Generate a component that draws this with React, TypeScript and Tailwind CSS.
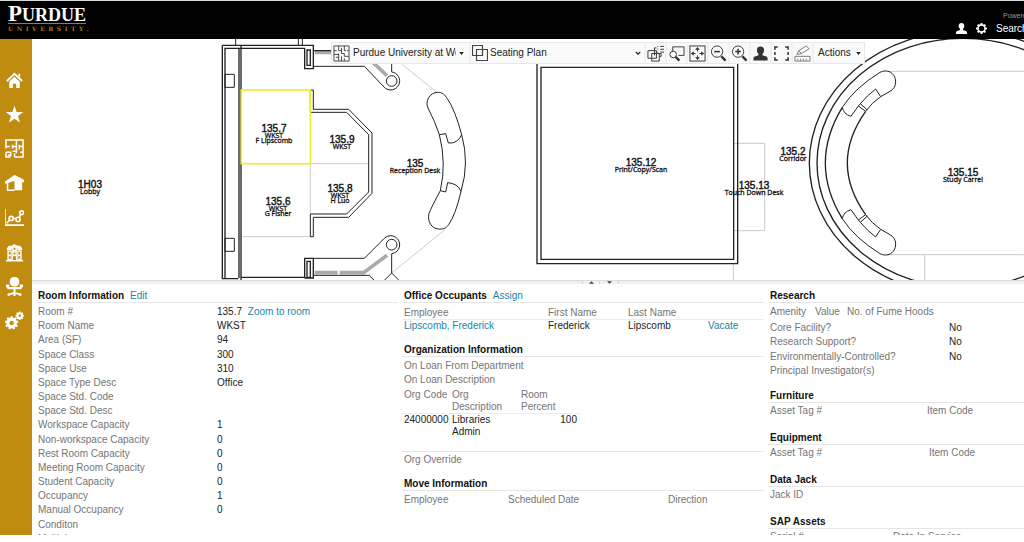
import type { ReactNode } from "react";

// ── Small building blocks ───────────────────────────────────────────────────

function Heading({ title, action }: { title: string; action?: string }) {
  return (
    <div className="flex gap-1.5 border-b border-[#e6e6e6] pl-[2px] leading-3">
      <h2 className="font-bold text-[#111]">{title}</h2>
      {action && (
        <a href="#" className="text-[#1c84a8]">
          {action}
        </a>
      )}
    </div>
  );
}

function Fields({ rows, className, valueAt }: { rows: [string, ReactNode?][]; className: string; valueAt: string }) {
  return (
    <table className={`w-full table-fixed ${className}`}>
      <tbody>
        {rows.map(([label, value]) => (
          <tr key={label}>
            <th scope="row" className={`${valueAt} py-0 pl-[2px] text-left font-normal text-[#757575]`}>
              {label}
            </th>
            <td className="p-0">{value}</td>
          </tr>
        ))}
      </tbody>
    </table>
  );
}

// Header-only tables: [label, width class]
function Columns({ cols }: { cols: [string, string][] }) {
  return (
    <table className="w-full table-fixed">
      <thead>
        <tr>
          {cols.map(([label, width]) => (
            <th key={label} scope="col" className={`${width} py-0 pl-[2px] text-left font-normal whitespace-nowrap text-[#757575]`}>
              {label}
            </th>
          ))}
        </tr>
      </thead>
    </table>
  );
}

// ── Header ──────────────────────────────────────────────────────────────────

function Logo() {
  return (
    <a href="#" aria-label="Purdue University" className="ml-2 w-[81px] font-['Liberation_Serif',serif] font-bold">
      <span className="block h-[19px] w-[78px] border-b border-[#a37c1c] text-[18px] leading-[18px] text-white">
        <span className="text-[23px]">P</span>URDUE
      </span>
      <span className="mt-[2px] flex justify-between font-['DejaVu_Serif',serif] text-[6px] leading-[6px] text-[#a37c1c]">
        {"UNIVERSITY.".split("").map((c, i) => (
          <span key={i}>{c}</span>
        ))}
      </span>
    </a>
  );
}

function PersonIcon({ className }: { className: string }) {
  return (
    <svg viewBox="0 0 16 16" className={className} fill="currentColor">
      <path d="M8 0c2.700 0 4.100 1.900 4.100 4.300 0 1.900-.9 3.300-1.900 4.200v1.700l4.300 1.400c1 .4 1.500 1.300 1.500 2.400v2H0v-2c0-1.100.5-2 1.500-2.400l4.300-1.400V8.500C4.800 7.600 3.900 6.200 3.900 4.300 3.900 1.900 5.300 0 8 0Z" />
    </svg>
  );
}

function Gear({ cx, cy, r, hole, teeth = 8 }: { cx: number; cy: number; r: number; hole: number; teeth?: number }) {
  return (
    <g>
      <circle cx={cx} cy={cy} r={(r + hole) / 2 - r * 0.1} fill="none" stroke="currentColor" strokeWidth={r * 0.8 - hole} />
      {Array.from({ length: teeth }, (_, i) => (
        <rect
          key={i}
          x={cx - r * 0.17}
          y={cy - r}
          width={r * 0.34}
          height={r * 0.4}
          fill="currentColor"
          transform={`rotate(${(i * 360) / teeth} ${cx} ${cy})`}
        />
      ))}
    </g>
  );
}

function Header() {
  return (
    <header className="flex h-[39px] shrink-0 overflow-hidden border-t border-[#d5dcda] bg-black pt-[4px]">
      <Logo />
      <div className="ml-auto flex items-end gap-[9px] pb-[5px]">
        <button type="button" aria-label="Account" className="text-white">
          <PersonIcon className="block h-[11px] w-[11px]" />
        </button>
        <button type="button" aria-label="Settings" className="text-white">
          <svg viewBox="0 0 12 12" className="block h-[11px] w-[11px]">
            <Gear cx={6} cy={6} r={6} hole={3} />
          </svg>
        </button>
        <div className="flex w-7 flex-col gap-1 whitespace-nowrap">
          <span className="pl-[7px] text-[7px] leading-[8px] text-[#9a9a9a]">Powered by</span>
          <a href="#" className="text-[10px] leading-[10px] text-white">
            Search
          </a>
        </div>
      </div>
    </header>
  );
}

// ── Sidebar ─────────────────────────────────────────────────────────────────

const NAV: { label: string; icon: ReactNode }[] = [
  {
    label: "Home",
    icon: (
      <>
        <path d="M2 10.500 10 3l8 7.500" fill="none" stroke="currentColor" strokeWidth="2" />
        <path d="M14 3h2v4l-2-2zM4.500 11 10 6l5.500 5v7h-3.700v-4.500H8.300V18H4.500z" fill="currentColor" />
      </>
    ),
  },
  { label: "Favorites", icon: <path d="m10 .8 2.300 6.600h7l-5.600 4.200 2.100 6.900L10 14.400l-5.800 4.100 2.100-6.900L.7 7.400h7z" fill="currentColor" /> },
  {
    label: "Floor plans",
    icon: (
      <path
        d="M6 19H1v-5M1 10V1h18v18H10M1 8h4M12 1v7H8M12 8v5H8M15 8h4M8 6v4M15 6v5M1 14h5v3H3M12 13v2M16 14h3M10 19v-4"
        fill="none"
        stroke="currentColor"
        strokeWidth="1.600"
      />
    ),
  },
  {
    label: "Space",
    icon: (
      <>
        <path d="M0 8 10 1l10 5v3l-2-.5V17H10V7L2 10H0z" fill="currentColor" />
        <path d="M2.700 9.500V17H10" fill="none" stroke="currentColor" strokeWidth="1.600" />
      </>
    ),
  },
  {
    label: "Reports",
    icon: (
      <g fill="none" stroke="currentColor" strokeWidth="1.700">
        <path d="M0 1v17h20M2 16l2.700-3.500M8.500 11h3.500M15 10l1.500-3.500" />
        <circle cx="6.500" cy="11" r="2.200" />
        <circle cx="13.700" cy="12" r="2.200" />
        <circle cx="17.500" cy="5" r="2" />
      </g>
    ),
  },
  {
    label: "Buildings",
    icon: (
      <>
        <path d="M2 8V5.500L4 3h3l3-2 3 2h3l2 2.500V8zM2.500 8h15v10H19v1.500H1V18h1.500z" fill="currentColor" />
        <path d="M4 9.500h2V12H4zM4 14h2v2.500H4zM14 9.500h2V12h-2zM14 14h2v2.500h-2zM9 5h2v2H9zM9 10h2v2H9zM8.500 14h3v4h-3z" fill="#c08c10" />
        <path d="M7.200 5.500v12.500M12.800 5.500v12.500M2 8h5M13 8h5" stroke="#c08c10" strokeWidth=".5" />
      </>
    ),
  },
  {
    label: "Workstations",
    icon: (
      <>
        <rect x="5" y="0" width="10" height="10" rx="4.500" fill="currentColor" />
        <path d="M1 8h3.500v2.500h11V8H19v2l-2 3H3l-2-3z" fill="currentColor" />
        <path d="M10 12v6M4 18.500l6-2 6 2" fill="none" stroke="currentColor" strokeWidth="2" />
        <circle cx="4" cy="18.500" r="1.400" fill="currentColor" />
        <circle cx="10" cy="18.600" r="1.400" fill="currentColor" />
        <circle cx="16" cy="18.500" r="1.400" fill="currentColor" />
      </>
    ),
  },
  {
    label: "Administration",
    icon: (
      <>
        <Gear cx={7} cy={12.500} r={7} hole={2.300} teeth={9} />
        <Gear cx={15.500} cy={5} r={4.500} hole={1.300} />
      </>
    ),
  },
];

function Sidebar() {
  return (
    <nav className="w-8 shrink-0 bg-[#c08c10] pt-6">
      <ul className="grid h-[275px] grid-rows-8 text-white">
        {NAV.map(({ label, icon }) => (
          <li key={label} className="flex items-center pl-[5px]">
            <a href="#" aria-label={label}>
              <svg viewBox="0 0 20 20" className="block h-[19px] w-[19px]">
                {icon}
              </svg>
            </a>
          </li>
        ))}
      </ul>
    </nav>
  );
}

// ── Floor plan ──────────────────────────────────────────────────────────────

// [center x, baseline of the number, number, lines below it]
const ROOMS: [number, number, string, string[]][] = [
  [90, 188, "1H03", ["Lobby"]],
  [274, 132, "135.7", ["WKST", "F Lipscomb"]],
  [342, 143, "135.9", ["WKST"]],
  [340, 192, "135.8", ["WKST", "H Luo"]],
  [278, 205, "135.6", ["WKST", "G Fisher"]],
  [415, 167, "135", ["Reception Desk"]],
  [641, 166, "135.12", ["Print/Copy/Scan"]],
  [754, 189, "135.13", ["Touch Down Desk"]],
  [793, 155, "135.2", ["Corridor"]],
  [963, 176, "135.15", ["Study Carrel"]],
];

function CarrelEnd() {
  return (
    <path d="M187 208Q224 150 300 103C320 92 347 103 347 132Q347 150 330 160L302 176L287 153Q262 172 241 197L262 216M302 176Q275 194 257 220L235 204L213 235Q190 228 187 208M241 197L235 204" />
  );
}

function FloorPlan() {
  return (
    <svg viewBox="32 39 992 241" preserveAspectRatio="xMinYMin slice" className="h-full w-full bg-white">
      <g fill="none" stroke="#222" strokeWidth="3">
        {/* west wall, workstations and reception */}
        <g transform="translate(215 38) scale(.33333)">
          <g stroke="#ccc">
            <path d="M78 377H461M286 377V528M78 596H286M560 78L665 163M690 575L530 705" />
          </g>
          <g stroke="#aaa" strokeWidth="11">
            <path d="M299 43H350M466 66L516 113M299 704H368M374 704H446L516 652" />
          </g>
          <path d="M62 0V22M250 0V22M262 0V22" />
          <path d="M22 22H295V92H269V31H30V720M22 22V722H70M72 31V720M78 22V727M276 36H286V82H276ZM295 38H350" strokeWidth="4" />
          <path d="M30 109H58V148H30ZM30 601H58V640H30Z" />
          <path d="M295 85H448L508 148A27 27 0 1 0 530 102V78M295 661H448L508 601A27 27 0 1 1 530 647V705L508 727M530 705L552 727M295 712H462L478 727" />
          <circle cx="530" cy="129" r="16" />
          <circle cx="530" cy="620" r="16" />
          <path d="M269 718V661H295V720H269M276 670H286V718H276ZM78 718H269" strokeWidth="4" />
          <path d="M286 156H295V214H401L471 285V466L401 538H295V596H286V528H395L461 462V290L395 223H286Z" />
          <path d="M640 212C628 190 645 163 668 163C682 163 690 170 697 182Q720 215 740 290Q764 375 738 460Q722 530 701 560C692 573 682 574 670 573C650 572 636 550 642 526Q650 506 676 458Q695 375 673 290Q660 250 640 212Z" />
          <path d="M673 290L692 287L700 315Q728 318 740 290M676 458L692 462L698 434Q728 436 738 460" />
          <rect x="79" y="156" width="207" height="221" stroke="#f4ee2c" strokeWidth="5" />
        </g>
        {/* print room */}
        <g transform="translate(500 38) scale(.33333)">
          <path d="M701 316H794V578H701M700 677V727" stroke="#ccc" />
          <path d="M111 70V677H713V70" strokeWidth="4" />
          <path d="M123 88H701V664H123Z" strokeWidth="4" />
        </g>
        {/* study carrels */}
        <g transform="translate(780 38) scale(.33333)">
          <path d="M325 100H732M320 650H732M434 650V727" stroke="#ccc" />
          <ellipse cx="553" cy="375" rx="465" ry="396" strokeWidth="4" />
          <ellipse cx="549" cy="375" rx="438" ry="374" strokeWidth="4" />
          <path d="M187 208Q85 375 187 542M257 220Q147 375 257 530" strokeWidth="4" />
          <CarrelEnd />
          <g transform="translate(0 750) scale(1 -1)">
            <CarrelEnd />
          </g>
        </g>
      </g>
      <g textAnchor="middle" fill="#111" stroke="#111">
        {ROOMS.map(([x, y, room, lines]) => (
          <g key={room}>
            <text x={x} y={y} fontSize="10" strokeWidth=".4">
              {room}
            </text>
            {lines.map((line, i) => (
              <text key={line} x={x} y={y + 6 + i * 5} fontSize="7" strokeWidth=".3" className="font-['Open_Sans',sans-serif]">
                {line}
              </text>
            ))}
          </g>
        ))}
      </g>
    </svg>
  );
}

// ── Plan toolbar ────────────────────────────────────────────────────────────

const TOOLS: { label: string; icon: ReactNode }[] = [
  {
    label: "Layers",
    icon: <path d="M1 6h9v8H1zM5 9h8v8H5zM8 11V3h2M13 9h2v3h-2M11 1.500h1M14 1.500h4M11 4.500h1M14 4.500h4M11 7.500h1M14 7.500h4" />,
  },
  {
    label: "Zoom window",
    icon: (
      <>
        <path d="M5 7V2h12v9h-6" />
        <circle cx="5.500" cy="10" r="3.500" />
        <path d="m8 12.500 4 4" strokeWidth="2.500" />
      </>
    ),
  },
  {
    label: "Zoom extents",
    icon: (
      <>
        <rect x="1" y="1" width="16" height="16" />
        <path d="M9 3v4M9 11v4M3 9h4M11 9h4" />
        <path d="m9 2 2.500 3h-5zM9 16l2.500-3h-5zM2 9l3-2.500v5zM16 9l-3-2.500v5z" fill="currentColor" stroke="none" />
      </>
    ),
  },
  {
    label: "Zoom out",
    icon: (
      <>
        <circle cx="7.500" cy="7" r="6" />
        <path d="M4.500 7h6" strokeWidth="1.600" />
        <path d="m12 12 4.500 4.500" strokeWidth="2.500" />
      </>
    ),
  },
  {
    label: "Zoom in",
    icon: (
      <>
        <circle cx="7.500" cy="7" r="6" />
        <path d="M4.500 7h6M7.500 4v6" strokeWidth="1.600" />
        <path d="m12 12 4.500 4.500" strokeWidth="2.500" />
      </>
    ),
  },
  {
    label: "Find person",
    icon: (
      <path
        d="M9 1.500c2.600 0 3.800 1.700 3.800 4 0 1.800-.8 3-1.700 3.900v1.500l4 1.300c.9.300 1.400 1.200 1.400 2.200v2.100h-15v-2.100c0-1 .5-1.900 1.400-2.200l4-1.300V9.400C6 8.500 5.200 7.300 5.200 5.500c0-2.300 1.200-4 3.800-4Z"
        fill="currentColor"
        stroke="none"
      />
    ),
  },
  { label: "Full screen", icon: <path d="M2 5V2h3M13 2h3v3M16 13v3h-3M5 16H2v-3M2 7.500v3M16 7.500v3" strokeWidth="1.600" /> },
  {
    label: "Measure",
    icon: (
      <g stroke="#777">
        <path d="M3 10 5 6l8-5 3 3-8 5zM5 6l3 3M1 12h16v5H1zM4 14.500v2M7 14.500v2M10 14.500v2M13 14.500v2" />
      </g>
    ),
  },
];

function Toolbar() {
  return (
    <div role="toolbar" className="absolute top-[3px] left-[299px] flex h-[22px] items-stretch gap-[2px] border border-[#e8e8e8] bg-[#f1f1f1] text-[#222]">
      <button type="button" className="flex w-[137px] items-center gap-[3px] bg-[#fafafa] pl-[1px]">
        <svg viewBox="0 0 18 18" className="h-[17px] w-[17px] shrink-0" fill="none" stroke="#444">
          <path d="M1 1h16v16H1zM1 6h3M6 1v5M6 6h3M9 3v6M1 10h5M6 9v8M9 12v5M9 9h3M12 1v5M12 6h2M15 6h2M12 9v3M12 12h5M12 14v3M3 13h3" />
        </svg>
        <span className="w-[103px] overflow-hidden text-left whitespace-nowrap">Purdue University at West</span>
        <svg viewBox="0 0 6 4" className="h-[3px] w-[5px] shrink-0">
          <path d="M0 0h6L3 4z" fill="#222" />
        </svg>
      </button>
      <div className="flex w-[173px] items-center gap-[2px] bg-[#fafafa] pl-[1px]">
        <svg viewBox="0 0 16 16" className="h-[16px] w-[16px] shrink-0" fill="none" stroke="#444">
          <path d="M.5.5h10v10H.5zM4.500 4.500h11v11h-11z" strokeWidth="1.200" />
        </svg>
        <select aria-label="Plan view" className="min-w-0 flex-1 appearance-none bg-transparent">
          <option>Seating Plan</option>
        </select>
        <svg viewBox="0 0 8 5" className="mr-[3px] h-[4px] w-[6px] shrink-0" fill="none" stroke="#222" strokeWidth="1.800">
          <path d="m1 1 3 3 3-3" />
        </svg>
      </div>
      {TOOLS.map(({ label, icon }) => (
        <button key={label} type="button" aria-label={label} className="flex w-[19px] items-center justify-center bg-[#f9f9f9] text-[#333]">
          <svg viewBox="0 0 18 18" className="h-[17px] w-[17px]" fill="none" stroke="currentColor">
            {icon}
          </svg>
        </button>
      ))}
      <button type="button" className="flex w-[50px] items-center gap-[5px] bg-[#fafafa] pl-1">
        Actions
        <svg viewBox="0 0 6 4" className="h-[3px] w-[5px]">
          <path d="M0 0h6L3 4z" fill="#222" />
        </svg>
      </button>
    </div>
  );
}

// ── Details ─────────────────────────────────────────────────────────────────

const ROOM_FIELDS: [string, ReactNode?][] = [
  [
    "Room #",
    <>
      135.7{" "}
      <a href="#" className="ml-[3px] text-[#1c84a8]">
        Zoom to room
      </a>
    </>,
  ],
  ["Room Name", "WKST"],
  ["Area (SF)", "94"],
  ["Space Class", "300"],
  ["Space Use", "310"],
  ["Space Type Desc", "Office"],
  ["Space Std. Code"],
  ["Space Std. Desc"],
  ["Workspace Capacity", "1"],
  ["Non-workspace Capacity", "0"],
  ["Rest Room Capacity", "0"],
  ["Meeting Room Capacity", "0"],
  ["Student Capacity", "0"],
  ["Occupancy", "1"],
  ["Manual Occupancy", "0"],
  ["Conditon"],
  ["Multiple"],
];

function RoomColumn() {
  return (
    <section>
      <Heading title="Room Information" action="Edit" />
      <Fields rows={ROOM_FIELDS} className="mt-[2px] h-[241px]" valueAt="w-[181px]" />
    </section>
  );
}

function OccupantColumn() {
  const th = "py-0 pl-[2px] text-left align-top font-normal text-[#757575]";
  const td = "py-0 pl-[2px] align-top";
  return (
    <div className="flex flex-col gap-3">
      <section>
        <Heading title="Office Occupants" action="Assign" />
        <table className="mt-[4px] w-full table-fixed">
          <thead>
            <tr className="border-b border-[#ececec]">
              <th className={`${th} w-[144px]`}>Employee</th>
              <th className={`${th} w-[80px]`}>First Name</th>
              <th className={`${th} w-[80px]`}>Last Name</th>
              <th className={th} aria-label="Action" />
            </tr>
          </thead>
          <tbody>
            <tr>
              <td className={td}>
                <a href="#" className="text-[#1c84a8]">
                  Lipscomb, Frederick
                </a>
              </td>
              <td className={td}>Frederick</td>
              <td className={td}>Lipscomb</td>
              <td className={td}>
                <a href="#" className="text-[#1c84a8]">
                  Vacate
                </a>
              </td>
            </tr>
          </tbody>
        </table>
      </section>

      <section>
        <Heading title="Organization Information" />
        <div className="mt-[2px] pl-[2px] leading-[14px] text-[#757575]">
          <p>On Loan From Department</p>
          <p>On Loan Description</p>
        </div>
        <table className="mt-[2px] w-[179px] table-fixed">
          <thead>
            <tr className="border-b border-[#ececec]">
              <th className={`${th} w-[48px]`}>Org Code</th>
              <th className={`${th} w-[69px]`}>Org Description</th>
              <th className={`${th} pr-4`}>Room Percent</th>
            </tr>
          </thead>
          <tbody>
            <tr>
              <td className={td}>24000000</td>
              <td className={`${td} pr-4`}>Libraries Admin</td>
              <td className={`${td} pr-1 text-right`}>100</td>
            </tr>
          </tbody>
        </table>
        <p className="mt-[13px] border-t border-[#e6e6e6] pt-[2px] pl-[2px] text-[#757575]">Org Override</p>
      </section>

      <section>
        <Heading title="Move Information" />
        <div className="mt-[3px]">
          <Columns cols={[["Employee", "w-[104px]"], ["Scheduled Date", "w-[160px]"], ["Direction", "w-auto"]]} />
        </div>
      </section>
    </div>
  );
}

const ASSETS: { title: string; cols: [string, string][] }[] = [
  { title: "Furniture", cols: [["Asset Tag #", "w-[157px]"], ["Item Code", "w-auto"]] },
  { title: "Equipment", cols: [["Asset Tag #", "w-[159px]"], ["Item Code", "w-auto"]] },
  { title: "Data Jack", cols: [["Jack ID", "w-auto"]] },
  { title: "SAP Assets", cols: [["Serial #", "w-[123px]"], ["Date In Service", "w-auto"]] },
];

const RESEARCH: [string, ReactNode?][] = [
  ["Core Facility?", "No"],
  ["Research Support?", "No"],
  ["Environmentally-Controlled?", "No"],
  ["Principal Investigator(s)"],
];

function ResearchColumn() {
  return (
    <div className="flex flex-col">
      <section className="mb-3">
        <Heading title="Research" />
        <div className="mt-[3px]">
          <Columns cols={[["Amenity", "w-[45px]"], ["Value", "w-[32px]"], ["No. of Fume Hoods", "w-auto"]]} />
        </div>
        <Fields rows={RESEARCH} className="mt-[3px] h-[57px]" valueAt="w-[181px]" />
      </section>
      {ASSETS.map(({ title, cols }) => (
        <section key={title} className="mb-[15px]">
          <Heading title={title} />
          <div className="mt-[2px]">
            <Columns cols={cols} />
          </div>
        </section>
      ))}
    </div>
  );
}

// ── Page ────────────────────────────────────────────────────────────────────

export default function App() {
  return (
    <div className="flex h-screen flex-col overflow-hidden bg-white pb-[7px] font-['Liberation_Sans',Arial,sans-serif] text-[10px] leading-3 text-[#222]">
      <Header />
      <div className="flex min-h-0 flex-1">
        <Sidebar />
        <main className="flex min-w-0 flex-1 flex-col">
          <section aria-label="Floor plan" className="relative h-[241px] shrink-0 overflow-hidden">
            <FloorPlan />
            <Toolbar />
          </section>
          <div className="flex h-1 shrink-0 justify-start overflow-hidden border-t border-[#dcdcdc] bg-[#f1f1f1] pl-[550px]">
            <button type="button" aria-label="Collapse plan" className="flex w-[18px] justify-center border-x border-[#d5d5d5]">
              <svg viewBox="0 0 6 3" className="h-[3px] w-[5px]">
                <path d="M3 0l3 3H0z" fill="#444" />
              </svg>
            </button>
            <button type="button" aria-label="Collapse details" className="flex w-[19px] justify-center border-r border-[#d5d5d5]">
              <svg viewBox="0 0 6 3" className="h-[3px] w-[5px]">
                <path d="M0 0h6L3 3z" fill="#444" />
              </svg>
            </button>
          </div>
          <div className="grid min-h-0 flex-1 grid-cols-[362fr_362fr_256fr] gap-x-1 overflow-hidden pt-[6px] pl-1">
            <RoomColumn />
            <OccupantColumn />
            <ResearchColumn />
          </div>
        </main>
      </div>
    </div>
  );
}
